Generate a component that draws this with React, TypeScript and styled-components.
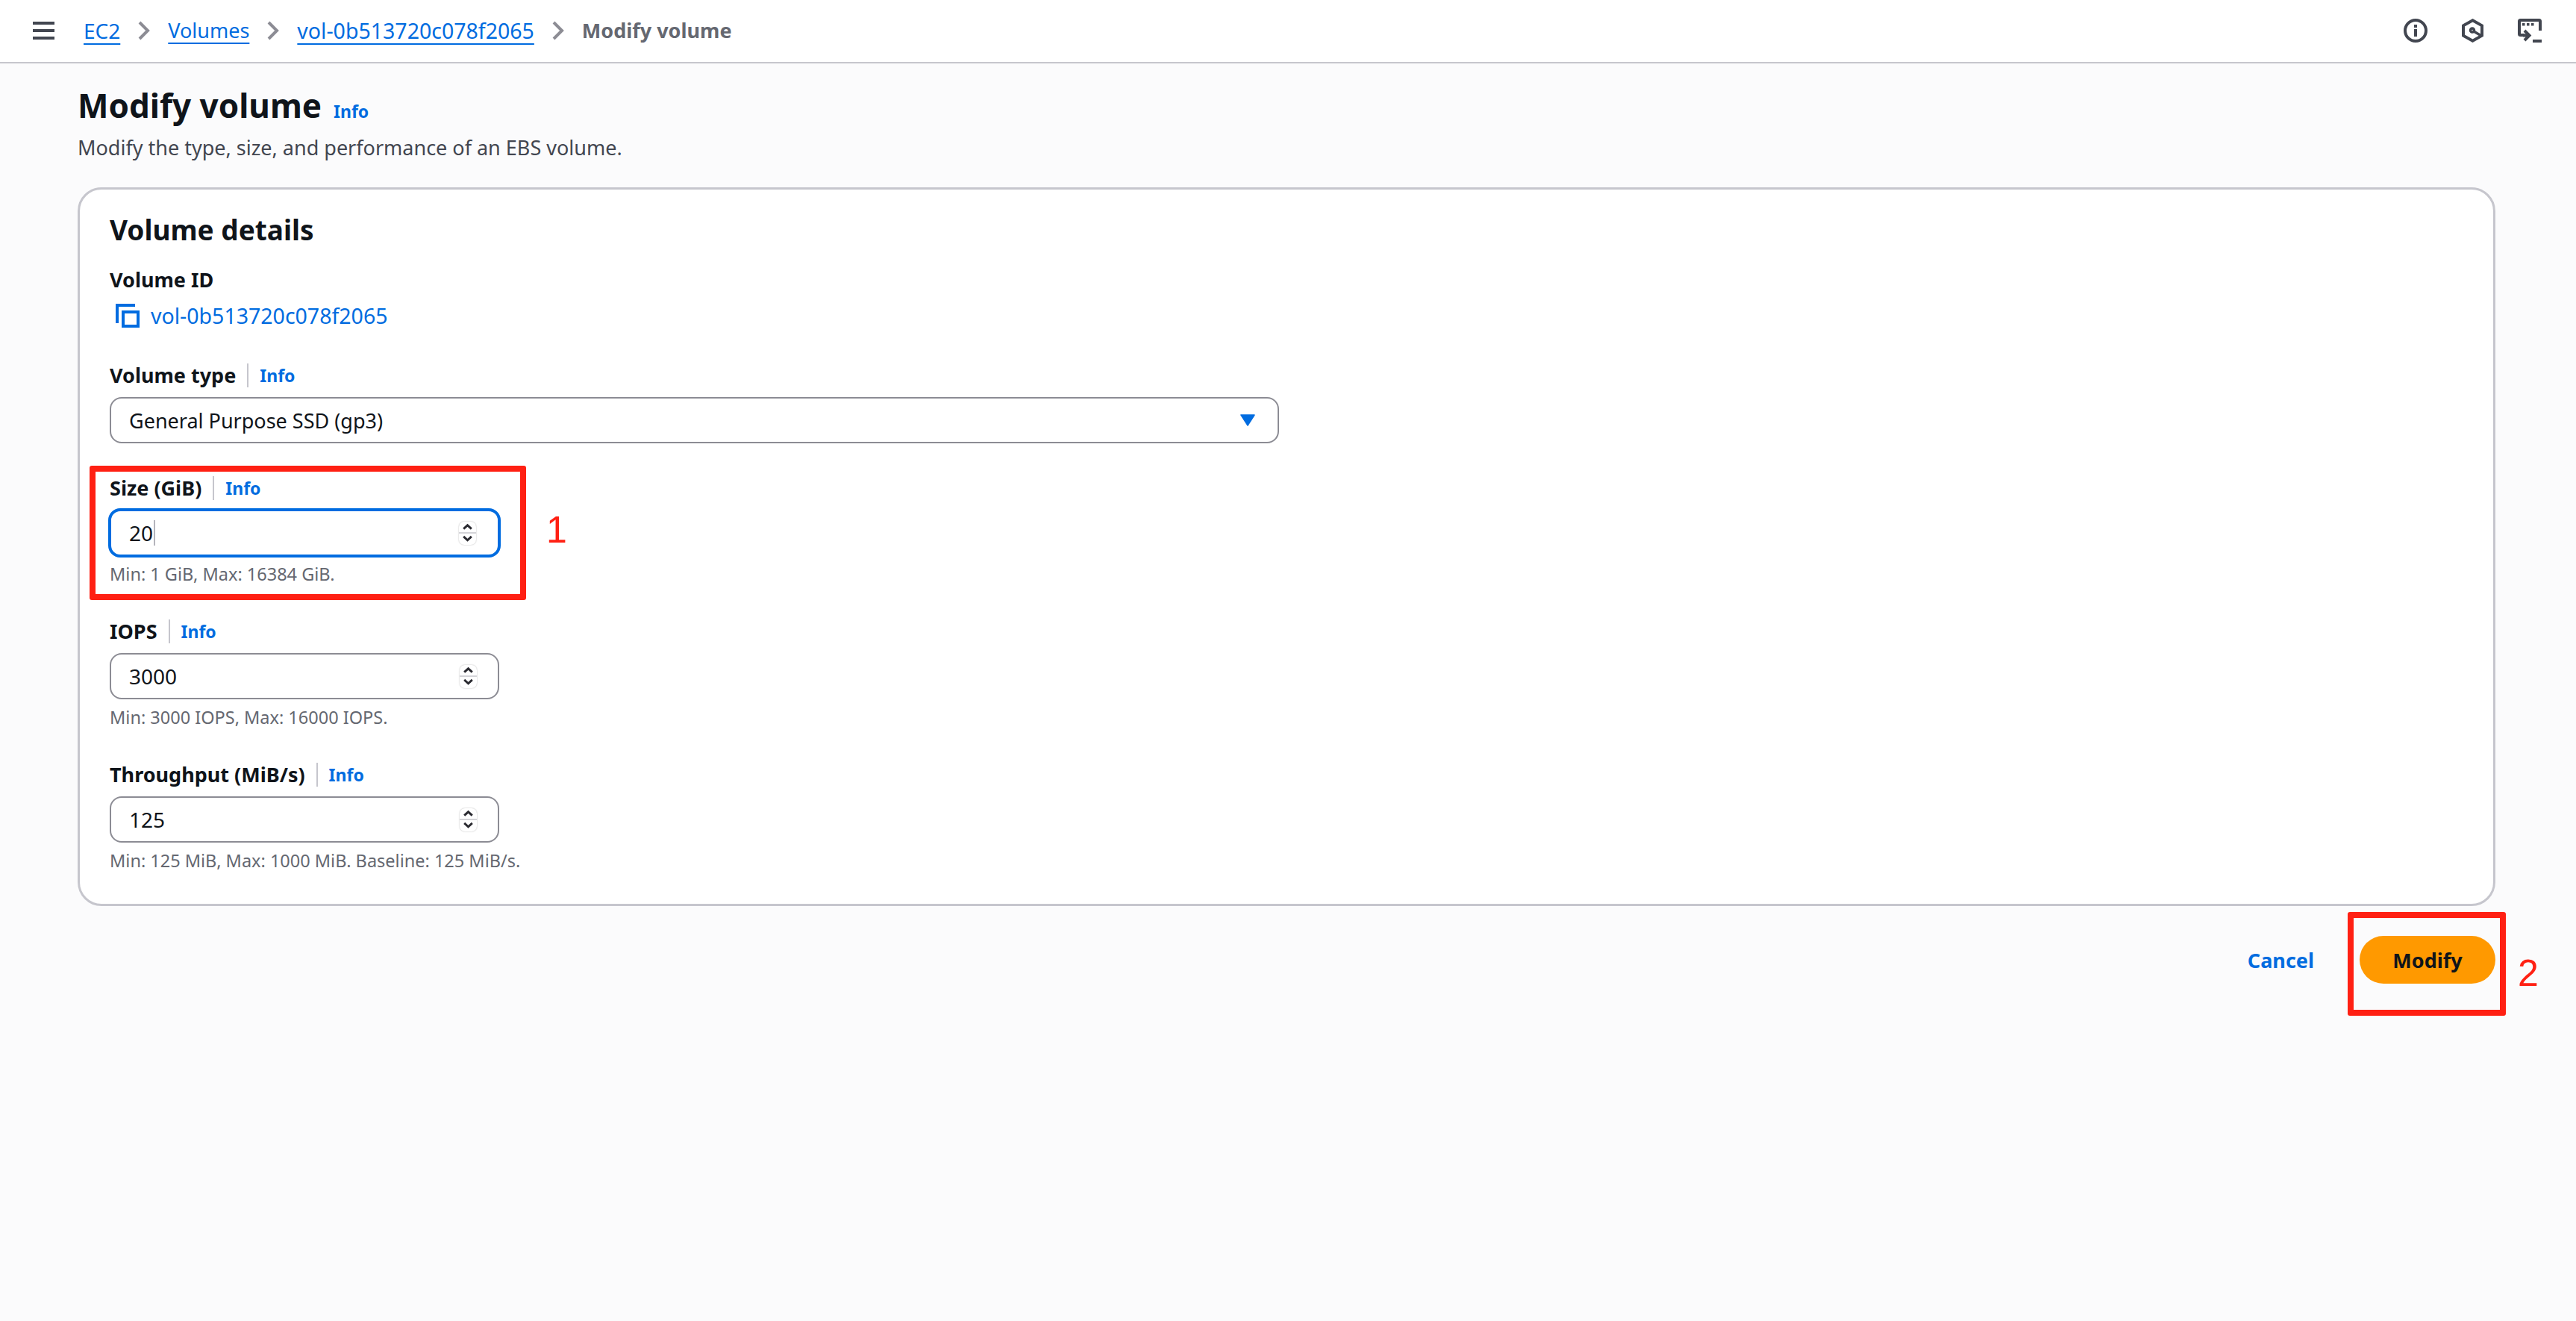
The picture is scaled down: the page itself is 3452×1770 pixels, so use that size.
import styled, { createGlobalStyle } from "styled-components";

const GlobalStyle = createGlobalStyle`
  html, body {
    margin: 0;
    padding: 0;
    background: #fbfbfc;
    font-family: "Noto Sans", "Open Sans", sans-serif;
    color: #0f141a;
  }
  * {
    box-sizing: border-box;
  }
`;

const Page = styled.div`
  width: 3452px;
  height: 1770px;
  overflow: hidden;
  background: #fbfbfc;
`;

const TopBar = styled.header`
  height: 85px;
  display: flex;
  align-items: center;
  justify-content: space-between;
  padding: 0 46px 2px 44px;
  background: #ffffff;
  border-bottom: 2px solid #c6c6cd;
`;

const Crumbs = styled.nav`
  display: flex;
  align-items: center;
`;

const MenuButton = styled.span`
  width: 29px;
  height: 24px;
  margin-right: 39px;
  display: flex;
  flex-direction: column;
  justify-content: space-between;

  i {
    display: block;
    height: 4px;
    background: #424650;
  }
`;

const CrumbLink = styled.a<{ $size?: number }>`
  font-size: ${(p) => p.$size ?? 27}px;
  line-height: 40px;
  color: #006ce0;
  text-decoration: underline;
  text-decoration-thickness: 2px;
  text-underline-offset: 6px;
`;

const CrumbCurrent = styled.span`
  font-size: 27px;
  line-height: 40px;
  font-weight: 700;
  color: #656871;
`;

const CrumbChevron = styled.svg`
  width: 18px;
  height: 26px;
  margin: 0 23px;
  flex: none;
`;

const TopIcons = styled.div`
  display: flex;
  align-items: center;
  gap: 46px;

  svg {
    display: block;
    height: 32px;
  }
`;

const Main = styled.main`
  padding: 0 108px 0 104px;
`;

const TitleRow = styled.div`
  display: flex;
  align-items: baseline;
  gap: 16px;
  margin-top: 24px;
`;

const Title = styled.h1`
  margin: 0;
  font-size: 44px;
  line-height: 64px;
  font-weight: 700;
`;

const InfoLink = styled.a`
  font-size: 23px;
  line-height: 32px;
  font-weight: 700;
  color: #006ce0;
`;

const Description = styled.p`
  margin: 5px 0 0;
  font-size: 27px;
  line-height: 40px;
  color: #424650;
`;

const Card = styled.section`
  margin-top: 33px;
  height: 963px;
  padding: 30px 40px 0;
  background: #ffffff;
  border: 3px solid #c6c6cd;
  border-radius: 32px;
`;

const CardTitle = styled.h2`
  margin: 0 0 23px;
  font-size: 37px;
  line-height: 48px;
  font-weight: 700;
`;

const Field = styled.div`
  position: relative;
  margin-bottom: 40px;
`;

const FieldLabel = styled.div`
  display: flex;
  align-items: center;
  height: 40px;
  margin-bottom: 9px;
`;

const LabelText = styled.span`
  font-size: 27px;
  line-height: 40px;
  font-weight: 700;
`;

const LabelInfo = styled(InfoLink)`
  margin-left: 15px;
  padding-left: 15px;
  border-left: 2px solid #c6c6cd;
`;

const CopyRow = styled.div`
  display: flex;
  align-items: center;
  gap: 15px;
  padding-left: 8px;
  height: 40px;
  margin-top: 8px;

  a {
    font-size: 28.5px;
    line-height: 40px;
    color: #006ce0;
  }
`;

const Select = styled.div`
  width: 1567px;
  height: 62px;
  margin-bottom: 2px;
  display: flex;
  align-items: center;
  justify-content: space-between;
  padding: 0 30px 0 24px;
  background: #ffffff;
  border: 2px solid #8c8c94;
  border-radius: 16px;
  font-size: 27px;
`;

const NumberBox = styled.div<{ $focused?: boolean }>`
  width: ${(p) => (p.$focused ? 526 : 522)}px;
  height: ${(p) => (p.$focused ? 66 : 62)}px;
  margin: ${(p) => (p.$focused ? "-2px 0 -2px -2px" : "0")};
  display: flex;
  align-items: center;
  padding: 0 ${(p) => (p.$focused ? 29 : 28)}px 0 24px;
  background: #ffffff;
  border: ${(p) => (p.$focused ? "4px solid #006ce0" : "2px solid #8c8c94")};
  border-radius: 16px;
  font-size: 28px;
  line-height: 40px;
`;

const Caret = styled.i`
  width: 2px;
  height: 34px;
  margin-left: 1px;
  background: #b4b4bb;
`;

const Spinner = styled.span`
  width: 23px;
  height: 31px;
  margin-left: auto;
  display: flex;
  flex-direction: column;
  background: #ffffff;
  border-radius: 7px;
  box-shadow: 0 0 2px rgba(0, 0, 0, 0.3);

  svg {
    display: block;
    flex: 1;
    width: 23px;
  }

  svg + svg {
    border-top: 2px solid #d4d4d8;
  }
`;

const Hint = styled.div`
  margin-top: 8px;
  font-size: 23.5px;
  line-height: 33px;
  color: #656871;
`;

const Footer = styled.div`
  position: relative;
  display: flex;
  align-items: center;
  justify-content: flex-end;
  gap: 61px;
  margin-top: 40px;
`;

const CancelLink = styled.a`
  font-size: 27px;
  font-weight: 700;
  color: #006ce0;
`;

const PrimaryButton = styled.button`
  width: 182px;
  height: 64px;
  border: 0;
  border-radius: 32px;
  background: #ff9900;
  font-family: inherit;
  font-size: 27px;
  font-weight: 700;
  color: #0f141a;
`;

const RedBox = styled.div<{ $top: number; $left: number; $width: number; $height: number }>`
  position: absolute;
  top: ${(p) => p.$top}px;
  left: ${(p) => p.$left}px;
  width: ${(p) => p.$width}px;
  height: ${(p) => p.$height}px;
  border: 8px solid #ff2013;
  border-radius: 3px;
  pointer-events: none;
`;

const StepNumber = styled.span<{ $top: number; $left: number }>`
  position: absolute;
  top: ${(p) => p.$top}px;
  left: ${(p) => p.$left}px;
  font-family: "Liberation Sans", Arial, sans-serif;
  font-size: 50px;
  line-height: 56px;
  color: #ff2013;
`;

const Chevron = () => (
  <CrumbChevron viewBox="0 0 18 26" fill="none" stroke="#8c8c94" strokeWidth="4">
    <path d="M3 2l11 11L3 24" />
  </CrumbChevron>
);

const SpinnerIcon = () => (
  <Spinner>
    <svg viewBox="0 0 23 15" fill="none" stroke="#2a2a30" strokeWidth="3">
      <path d="M6 10l5.5-5 5.500 5" />
    </svg>
    <svg viewBox="0 0 23 15" fill="none" stroke="#2a2a30" strokeWidth="3">
      <path d="M6 4l5.500 5 5.500-5" />
    </svg>
  </Spinner>
);

const fields = [
  { label: "IOPS", value: "3000", hint: "Min: 3000 IOPS, Max: 16000 IOPS." },
  { label: "Throughput (MiB/s)", value: "125", hint: "Min: 125 MiB, Max: 1000 MiB. Baseline: 125 MiB/s." },
];

export default function App() {
  return (
    <Page>
      <GlobalStyle />
      <TopBar>
        <Crumbs>
          <MenuButton>
            <i />
            <i />
            <i />
          </MenuButton>
          <CrumbLink $size={28}>EC2</CrumbLink>
          <Chevron />
          <CrumbLink>Volumes</CrumbLink>
          <Chevron />
          <CrumbLink $size={28.5}>vol-0b513720c078f2065</CrumbLink>
          <Chevron />
          <CrumbCurrent>Modify volume</CrumbCurrent>
        </Crumbs>
        <TopIcons>
          <svg viewBox="0 0 32 32" width="32" fill="none" stroke="#424650" strokeWidth="4">
            <circle cx="16" cy="16" r="14" />
            <path d="M16 14v10M16 8v4" />
          </svg>
          <svg viewBox="0 0 29 32" width="29" fill="none" stroke="#424650" strokeWidth="4">
            <path d="M14.500 2.300L27 9.300v13.400l-12.500 7-12.500-7V9.300z" />
            <circle cx="14" cy="15.500" r="2.500" strokeWidth="3.500" />
            <path d="M16 17l11 6.500" strokeWidth="3.500" />
          </svg>
          <svg viewBox="0 0 32 32" width="32" fill="none" stroke="#424650" strokeWidth="4">
            <path d="M9 22H3.500a1.500 1.500 0 0 1-1.500-1.500V3.500A1.500 1.500 0 0 1 3.500 2h25A1.500 1.500 0 0 1 30 3.500V16" />
            <path d="M6 6h3.500v3.500H6zM12 6h3.500v3.500H12zM18 6h3.500v3.500H18z" fill="#424650" stroke="none" />
            <path d="M9 16l6.500 6.500L9 29M7 22.500h8" />
            <path d="M20 30h12" />
          </svg>
        </TopIcons>
      </TopBar>
      <Main>
        <TitleRow>
          <Title>Modify volume</Title>
          <InfoLink>Info</InfoLink>
        </TitleRow>
        <Description>Modify the type, size, and performance of an EBS volume.</Description>
        <Card>
          <CardTitle>Volume details</CardTitle>
          <Field>
            <LabelText>Volume ID</LabelText>
            <CopyRow>
              <svg viewBox="0 0 32 32" width="32" height="32" fill="none" stroke="#006ce0" strokeWidth="4">
                <path d="M26 2H2v24" />
                <path d="M10 11h20v19H10z" />
              </svg>
              <a>vol-0b513720c078f2065</a>
            </CopyRow>
          </Field>
          <Field>
            <FieldLabel>
              <LabelText>Volume type</LabelText>
              <LabelInfo>Info</LabelInfo>
            </FieldLabel>
            <Select>
              General Purpose SSD (gp3)
              <svg viewBox="0 0 20 16" width="20" height="16">
                <path d="M1 1h18l-9 14z" fill="#006ce0" stroke="#006ce0" strokeWidth="1.500" strokeLinejoin="round" />
              </svg>
            </Select>
          </Field>
          <Field>
            <FieldLabel>
              <LabelText>Size (GiB)</LabelText>
              <LabelInfo>Info</LabelInfo>
            </FieldLabel>
            <NumberBox $focused>
              20
              <Caret />
              <SpinnerIcon />
            </NumberBox>
            <Hint>Min: 1 GiB, Max: 16384 GiB.</Hint>
            <RedBox $top={-10} $left={-27} $width={585} $height={180} />
            <StepNumber $top={48} $left={585}>1</StepNumber>
          </Field>
          {fields.map((field) => (
            <Field key={field.label}>
              <FieldLabel>
                <LabelText>{field.label}</LabelText>
                <LabelInfo>Info</LabelInfo>
              </FieldLabel>
              <NumberBox>
                {field.value}
                <SpinnerIcon />
              </NumberBox>
              <Hint>{field.hint}</Hint>
            </Field>
          ))}
        </Card>
        <Footer>
          <CancelLink>Cancel</CancelLink>
          <PrimaryButton>Modify</PrimaryButton>
          <RedBox $top={-32} $left={3042} $width={212} $height={139} />
          <StepNumber $top={22} $left={3270}>2</StepNumber>
        </Footer>
      </Main>
    </Page>
  );
}
